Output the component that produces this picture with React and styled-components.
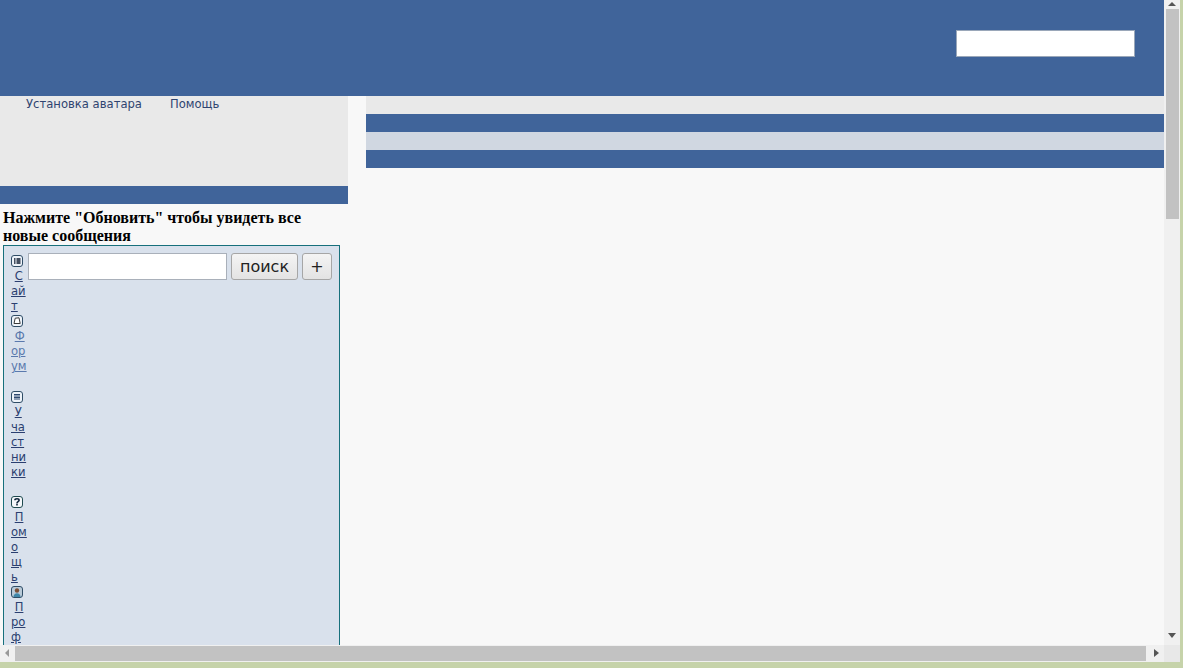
import React from 'react';
import styled, { createGlobalStyle } from 'styled-components';

const Global = createGlobalStyle`
  html, body { margin: 0; padding: 0; height: 100%; overflow: hidden; }
  body { background: #c6d3aa; }
`;

const Blue = '#40649a';

const Frame = styled.div`
  display: grid;
  grid-template-columns: 1164px 16px;
  grid-template-rows: 645px 17px;
  width: 1183px;
  height: 668px;
  box-sizing: border-box;
  border-right: 1px solid #c6d3aa;
  background: #c6d3aa;
`;

const Page = styled.div`
  background: #f8f8f8;
  overflow: hidden;
`;

const Header = styled.header`
  display: flex;
  justify-content: flex-end;
  height: 96px;
  background: ${Blue};
`;

const HeaderSearch = styled.input`
  width: 179px;
  height: 27px;
  margin: 30px 29px 0 0;
  padding: 0;
  box-sizing: border-box;
  border: 1px solid #9aa7b9;
  background: #fff;
`;

const Columns = styled.div`
  display: flex;
  gap: 18px;
`;

const Left = styled.div`
  width: 348px;
  flex: none;
`;

const Right = styled.div`
  flex: 1;
`;

const Menu = styled.div`
  display: flex;
  gap: 28px;
  height: 90px;
  padding: 1px 0 0 26px;
  box-sizing: border-box;
  background: #e9e9e9;
  font: 11.6px/15px "DejaVu Sans", sans-serif;
`;

const MenuLink = styled.span`
  color: #2f4470;
`;

const Strip = styled.div`
  height: 18px;
  background: ${(p) => p.$color};
`;

const Notice = styled.h3`
  height: 36px;
  margin: 5px 0 0 3px;
  width: 330px;
  font: bold 16px/18px "Liberation Serif", serif;
  color: #000;
`;

const Panel = styled.div`
  display: flex;
  align-items: flex-start;
  width: 337px;
  height: 500px;
  margin-left: 3px;
  padding: 7px 0 0 7px;
  box-sizing: border-box;
  border: 1px solid #17707c;
  border-bottom: 0;
  background: #d9e1ec;
`;

const Nav = styled.nav`
  width: 17px;
  flex: none;
  padding-top: 1px;
  font: 11.6px/15px "DejaVu Sans", sans-serif;
  word-break: break-all;
`;

const NavItem = styled.div`
  padding-bottom: ${(p) => p.$after || 0}px;
`;

const NavLink = styled.a`
  color: ${(p) => (p.$visited ? '#5a79ad' : '#2b3f70')};
  text-decoration: underline;
`;

const NavIcon = styled.svg`
  display: block;
  width: 12px;
  height: 12px;
  margin: 1px 0 2px;
`;

const SearchRow = styled.form`
  display: flex;
  gap: 4px;
  margin: 0;
`;

const SearchInput = styled.input`
  width: 199px;
  height: 27px;
  padding: 0;
  box-sizing: border-box;
  border: 1px solid #a9b0ba;
  background: #fff;
`;

const SearchButton = styled.button`
  width: ${(p) => p.$w}px;
  height: 27px;
  padding: 0;
  border: 1px solid #a6a6a6;
  border-radius: 3px;
  background: linear-gradient(#f4f4f4, #e3e3e3);
  color: #222;
  font: 16px "DejaVu Sans", sans-serif;
`;

const VBar = styled.div`
  display: flex;
  flex-direction: column;
  background: #f0f0f0;
`;

const HBar = styled.div`
  display: flex;
  align-items: stretch;
  background: #f0f0f0;
`;

const Corner = styled.div`
  background: #e8e8e8;
`;

const VThumb = styled.div`
  width: 13px;
  height: 210px;
  margin: 0 1px 0 2px;
  background: #c2c2c2;
`;

const VSpace = styled.div`
  flex: 1;
`;

const HThumb = styled.div`
  width: 1131px;
  background: #c2c2c2;
  margin: 1px 0;
`;

const Arrow = styled.svg`
  display: block;
  width: ${(p) => p.$w}px;
  height: ${(p) => p.$h}px;
  flex: none;
  fill: #555;
`;

function IconBox({ children, fill = '#eef3f9', stroke = '#2f4d66' }) {
  return (
    <NavIcon viewBox="0 0 12 12">
      <rect x="0.5" y="0.5" width="11" height="11" rx="2.5" fill={fill} stroke={stroke} />
      {children}
    </NavIcon>
  );
}

export default function App() {
  return (
    <>
      <Global />
      <Frame>
        <Page>
          <Header>
            <HeaderSearch />
          </Header>
          <Columns>
            <Left>
              <Menu>
                <MenuLink>Установка аватара</MenuLink>
                <MenuLink>Помощь</MenuLink>
              </Menu>
              <Strip $color={Blue} />
              <Notice>Нажмите "Обновить" чтобы увидеть все новые сообщения</Notice>
              <Panel>
                <Nav>
                  <NavItem>
                    <IconBox>
                      <path d="M3 4h1.5M3 6h1.5M3 8h1.5M5.5 4H9.5M5.5 6H9.5M5.5 8H9.5" stroke="#0d1a2e" strokeWidth="1.3" />
                    </IconBox>
                    &nbsp;<NavLink>Сайт</NavLink>
                  </NavItem>
                  <NavItem $after={16}>
                    <IconBox>
                      <path d="M3 8.5L4.2 3.2 8 2.8 9.2 8.5z" fill="#fff" stroke="#3a3a3a" />
                    </IconBox>
                    &nbsp;<NavLink $visited>Форум</NavLink>
                  </NavItem>
                  <NavItem $after={15}>
                    <IconBox>
                      <path d="M3 3.5h6M3 5h6M3 6.5h6M3 8h6" stroke="#2f4a70" />
                    </IconBox>
                    &nbsp;<NavLink>Участники</NavLink>
                  </NavItem>
                  <NavItem>
                    <IconBox fill="#f6f8fb" stroke="#1f4a4f">
                      <path d="M3.9 4.2c0-2 4.2-2 4.2 0 0 1.5-2.1 1.4-2.1 3M6 7.8v1.6" fill="none" stroke="#12263c" strokeWidth="1.6" />
                    </IconBox>
                    &nbsp;<NavLink>Помощь</NavLink>
                  </NavItem>
                  <NavItem>
                    <IconBox fill="#b9cad8" stroke="#2f4d66">
                      <circle cx="6" cy="4.5" r="2.2" fill="#7a4f36" />
                      <path d="M2.5 11c0-5 7-5 7 0z" fill="#3f86a8" />
                    </IconBox>
                    &nbsp;<NavLink>Профиль</NavLink>
                  </NavItem>
                </Nav>
                <SearchRow onSubmit={(e) => e.preventDefault()}>
                  <SearchInput />
                  <SearchButton $w={67}>поиск</SearchButton>
                  <SearchButton $w={30}>+</SearchButton>
                </SearchRow>
              </Panel>
            </Left>
            <Right>
              <Strip $color="#e9e9e9" />
              <Strip $color={Blue} />
              <Strip $color="#d0d7e1" />
              <Strip $color={Blue} />
            </Right>
          </Columns>
        </Page>
        <VBar>
          <Arrow $w={16} $h={9} viewBox="0 0 16 9"><path d="M8 2l4 4H4z" /></Arrow>
          <VThumb />
          <VSpace />
          <Arrow $w={16} $h={16} viewBox="0 0 16 16"><path d="M4 4h8L8 9z" /></Arrow>
        </VBar>
        <HBar>
          <Arrow $w={15} $h={17} viewBox="0 0 15 17"><path d="M9 4v8L5 8z" fill="#999" /></Arrow>
          <HThumb />
          <VSpace />
          <Arrow $w={18} $h={17} viewBox="0 0 18 17"><path d="M8 4v8l5-4z" /></Arrow>
        </HBar>
        <Corner />
      </Frame>
    </>
  );
}
